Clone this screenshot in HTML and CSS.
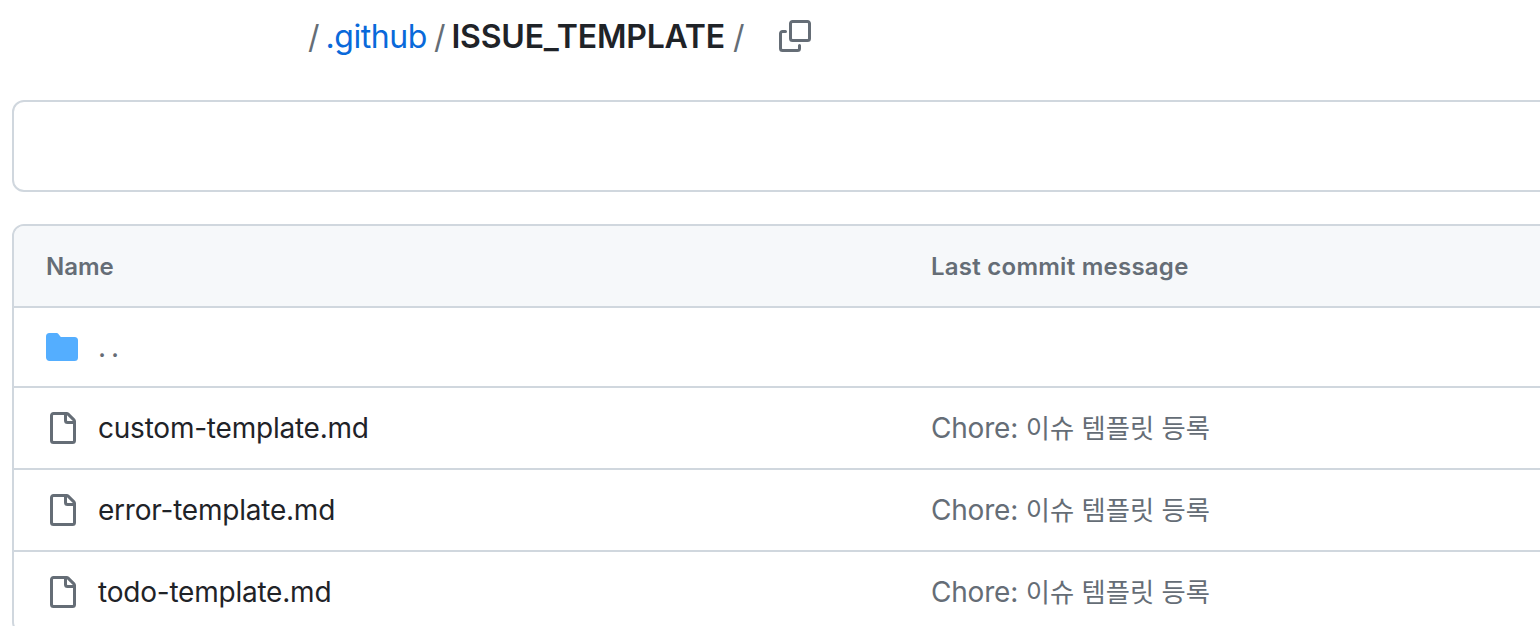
FILE: index.html
```html
<!DOCTYPE html>
<html lang="ko">
<head>
    <title>ISSUE_TEMPLATE</title>
    <meta charset="utf-8">
    <link rel="stylesheet" href="styles.css">
</head>
<body>
    <div class="breadcrumb">
        <span class="sep">/</span>
        <a class="crumb-link" href="#">.github</a>
        <span class="sep">/</span>
        <strong class="crumb-current">ISSUE_TEMPLATE</strong>
        <span class="sep">/</span>
        <button class="copy-button" aria-label="Copy path">
            <svg viewBox="0 0 16 16" width="32" height="32">
                <path d="M0 6.75C0 5.784.784 5 1.75 5h1.5a.75.75 0 0 1 0 1.5h-1.5a.25.25 0 0 0-.25.25v7.5c0 .138.112.25.25.25h7.5a.25.25 0 0 0 .25-.25v-1.5a.75.75 0 0 1 1.5 0v1.5A1.75 1.75 0 0 1 9.25 16h-7.5A1.75 1.75 0 0 1 0 14.25Z"></path>
                <path d="M5 1.75C5 .784 5.784 0 6.75 0h7.5C15.216 0 16 .784 16 1.75v7.5A1.75 1.75 0 0 1 14.25 11h-7.5A1.75 1.75 0 0 1 5 9.25Zm1.75-.25a.25.25 0 0 0-.25.25v7.5c0 .138.112.25.25.25h7.5a.25.25 0 0 0 .25-.25v-7.5a.25.25 0 0 0-.25-.25Z"></path>
            </svg>
        </button>
    </div>

    <div class="commit-box"></div>

    <div class="file-table">
        <div class="file-row file-head">
            <div class="name-cell">Name</div>
            <div class="message-cell">Last commit message</div>
        </div>
        <div class="file-row parent-row">
            <div class="name-cell">
                <svg class="icon-folder" viewBox="0 0 16 16" width="32" height="32">
                    <path d="M1.75 1A1.75 1.75 0 0 0 0 2.75v10.5C0 14.216.784 15 1.75 15h12.5A1.75 1.75 0 0 0 16 13.25v-8.5A1.75 1.75 0 0 0 14.25 3H7.5a.25.25 0 0 1-.2-.1l-.9-1.2C6.07 1.26 5.55 1 5 1H1.75Z"></path>
                </svg>
                <span class="parent-link">..</span>
            </div>
            <div class="message-cell"></div>
        </div>
        <div class="file-row">
            <div class="name-cell">
                <svg class="icon-file" viewBox="0 0 16 16" width="32" height="32">
                    <path d="M2 1.75C2 .784 2.784 0 3.75 0h6.586c.464 0 .909.184 1.237.513l2.914 2.914c.329.328.513.773.513 1.237v9.586A1.75 1.75 0 0 1 13.25 16h-9.5A1.75 1.75 0 0 1 2 14.25Zm1.75-.25a.25.25 0 0 0-.25.25v12.5c0 .138.112.25.25.25h9.5a.25.25 0 0 0 .25-.25V6h-2.75A1.75 1.75 0 0 1 9 4.25V1.5Zm6.75.062V4.25c0 .138.112.25.25.25h2.688l-.011-.013-2.914-2.914-.013-.011Z"></path>
                </svg>
                <span class="file-name">custom-template.md</span>
            </div>
            <div class="message-cell">Chore: <span class="ko">이슈 템플릿 등록</span></div>
        </div>
        <div class="file-row">
            <div class="name-cell">
                <svg class="icon-file" viewBox="0 0 16 16" width="32" height="32">
                    <path d="M2 1.75C2 .784 2.784 0 3.75 0h6.586c.464 0 .909.184 1.237.513l2.914 2.914c.329.328.513.773.513 1.237v9.586A1.75 1.75 0 0 1 13.25 16h-9.5A1.75 1.75 0 0 1 2 14.25Zm1.75-.25a.25.25 0 0 0-.25.25v12.5c0 .138.112.25.25.25h9.5a.25.25 0 0 0 .25-.25V6h-2.75A1.75 1.75 0 0 1 9 4.25V1.5Zm6.75.062V4.25c0 .138.112.25.25.25h2.688l-.011-.013-2.914-2.914-.013-.011Z"></path>
                </svg>
                <span class="file-name">error-template.md</span>
            </div>
            <div class="message-cell">Chore: <span class="ko">이슈 템플릿 등록</span></div>
        </div>
        <div class="file-row">
            <div class="name-cell">
                <svg class="icon-file" viewBox="0 0 16 16" width="32" height="32">
                    <path d="M2 1.75C2 .784 2.784 0 3.75 0h6.586c.464 0 .909.184 1.237.513l2.914 2.914c.329.328.513.773.513 1.237v9.586A1.75 1.75 0 0 1 13.25 16h-9.5A1.75 1.75 0 0 1 2 14.25Zm1.75-.25a.25.25 0 0 0-.25.25v12.5c0 .138.112.25.25.25h9.5a.25.25 0 0 0 .25-.25V6h-2.75A1.75 1.75 0 0 1 9 4.25V1.5Zm6.75.062V4.25c0 .138.112.25.25.25h2.688l-.011-.013-2.914-2.914-.013-.011Z"></path>
                </svg>
                <span class="file-name">todo-template.md</span>
            </div>
            <div class="message-cell">Chore: <span class="ko">이슈 템플릿 등록</span></div>
        </div>
    </div>
</body>
</html>
```

FILE: styles.css
```css
html, body {
    height: 626px;
}

body {
    margin: 0;
    overflow: hidden;
    background: #ffffff;
    color: #1f2328;
    font-family: "Inter", "Noto Sans CJK KR", sans-serif;
    font-size: 28px;
}

.breadcrumb {
    display: flex;
    align-items: center;
    height: 72px;
    padding-left: 308px;
    font-size: 32px;
    color: #656d76;
}

.sep {
    margin-right: 6px;
}

.crumb-link {
    margin-right: 7px;
    color: #0969da;
    text-decoration: none;
    letter-spacing: -0.45px;
}

.crumb-current {
    margin-right: 8px;
    color: #1f2328;
    font-weight: 600;
    letter-spacing: -0.2px;
}

.copy-button {
    display: flex;
    margin-left: 28px;
    padding: 0;
    border: 0;
    background: none;
    fill: #656d76;
}

.commit-box {
    box-sizing: border-box;
    width: 1600px;
    height: 92px;
    margin: 28px 0 0 12px;
    border: 2px solid #d0d7de;
    border-radius: 12px;
}

.file-table {
    box-sizing: border-box;
    width: 1600px;
    margin: 32px 0 0 12px;
    border: 2px solid #d0d7de;
    border-radius: 12px;
    overflow: hidden;
}

.file-row {
    display: grid;
    grid-template-columns: 917px 1fr;
    height: 80px;
    border-top: 2px solid #d0d7de;
    align-items: center;
}

.file-head {
    border-top: 0;
    background: #f6f8fa;
    color: #656d76;
    font-size: 24px;
    font-weight: 600;
}

.parent-row {
    height: 78px;
}

.name-cell {
    display: flex;
    align-items: center;
    gap: 20px;
    padding-left: 32px;
}

.file-name {
    letter-spacing: -0.22px;
}

.message-cell {
    padding-bottom: 3px;
    color: #656d76;
    letter-spacing: -0.2px;
}

.file-head .message-cell {
    padding-bottom: 0;
    letter-spacing: 0.25px;
}

.ko {
    font-size: 26.3px;
    letter-spacing: 0;
}

.icon-folder {
    fill: #54aeff;
}

.icon-file {
    fill: #656d76;
}

.parent-link {
    color: #656d76;
    letter-spacing: 5px;
}
```
